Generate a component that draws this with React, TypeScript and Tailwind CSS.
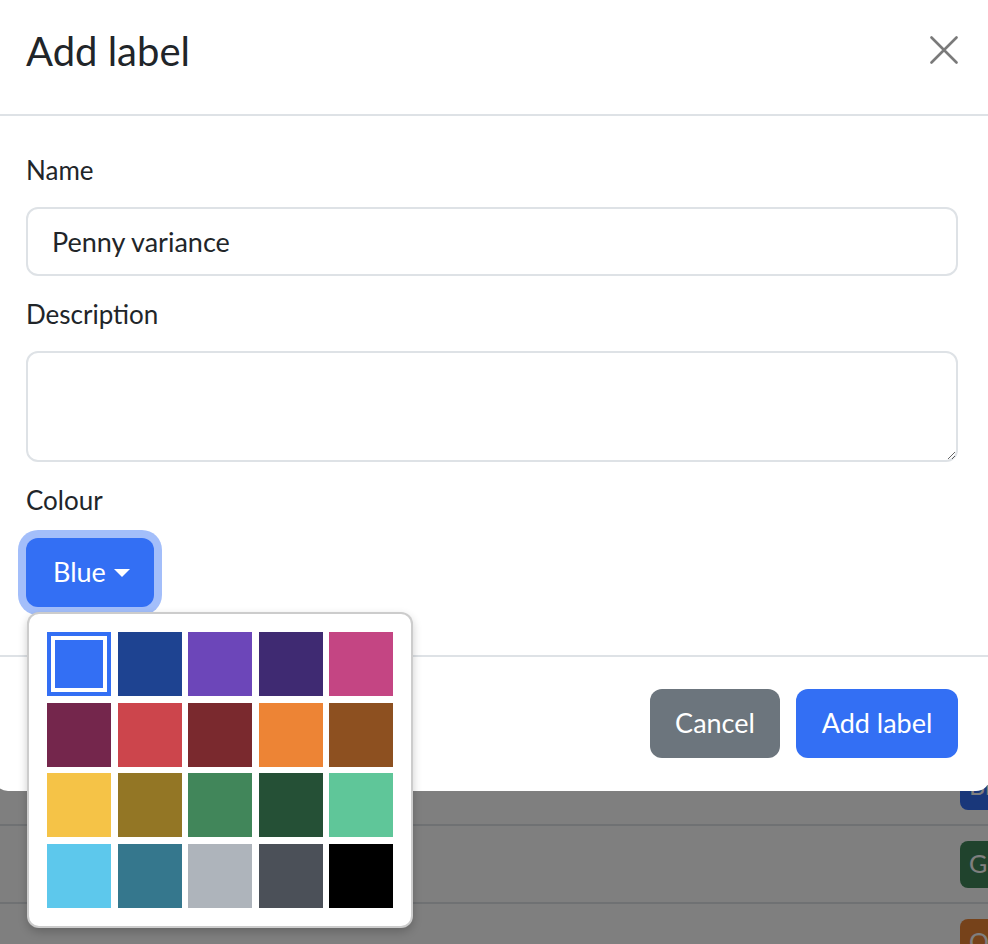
import React from "react";

const swatches = [
  "#336ff4", "#1e4391", "#6c46b9", "#3f2a72", "#c44583",
  "#74264c", "#cc454c", "#7a292e", "#ed8435", "#8d5020",
  "#f5c347", "#937625", "#41865a", "#255036", "#5fc699",
  "#5dc8ec", "#35778d", "#aeb4bb", "#4b5058", "#000000",
];

export default function App() {
  return (
    <div className="relative h-[944px] w-[988px] overflow-hidden bg-white font-['Lato',sans-serif] text-[#212529]">
      {/* background page */}
      <div className="pt-[748px]">
        {[
          { c: "bg-[#336ff4]", t: "Blue" },
          { c: "bg-[#41865a]", t: "Green" },
          { c: "bg-[#ed8435]", t: "Orange" },
        ].map((r) => (
          <div key={r.t} className="flex h-[78px] items-center whitespace-nowrap border-b-2 border-[#dee2e6] pl-[960px]">
            <div className={`flex h-[47px] items-center rounded-[8px] px-[9px] text-[25px] text-white ${r.c}`}>{r.t}</div>
          </div>
        ))}
      </div>

      {/* overlay */}
      <div className="absolute inset-0 bg-black/50" />

      {/* modal */}
      <div className="absolute left-[-6px] top-0 w-[996px] rounded-b-[14px] bg-white">
        <div className="flex h-[116px] items-start justify-between border-b-2 border-[#dee2e6] px-[32px] pt-[27px]">
          <h1 className="text-[40px] font-normal leading-[48px]">Add label</h1>
          <svg width="28" height="28" viewBox="0 0 28 28" className="mt-[9px]">
            <path d="M1.5 1.5 L26.5 26.5 M26.5 1.5 L1.5 26.5" stroke="#7a7a7a" strokeWidth="2.6" strokeLinecap="round" />
          </svg>
        </div>

        <div className="px-[32px] pb-[48px] pt-[33px]">
          <div className="mb-[17px]">
            <div className="mb-[15px] h-[43px] text-[26px] leading-[43px]">Name</div>
            <input
              readOnly
              value="Penny variance"
              className="block h-[69px] w-full rounded-[12px] border-2 border-[#dee2e6] px-[24px] text-[27px] text-[#212529] outline-none"
            />
          </div>
          <div className="mb-[17px]">
            <div className="mb-[15px] h-[43px] text-[26px] leading-[43px]">Description</div>
            <textarea className="block h-[111px] w-full rounded-[12px] border-2 border-[#dee2e6] px-[24px] text-[27px] outline-none" />
          </div>
          <div>
            <div className="mb-[16px] h-[43px] text-[26px] leading-[43px]">Colour</div>
            <button className="flex h-[69px] w-[128px] items-center gap-[8px] rounded-[12px] bg-[#336ff4] pl-[27px] text-[27px] text-white ring-[8px] ring-[#336ff4]/45">
              <span>Blue</span>
              <span className="h-0 w-0 border-x-[8px] border-t-[8px] border-x-transparent border-t-white" />
            </button>
          </div>
        </div>

        <div className="flex justify-end gap-[16px] border-t-2 border-[#dee2e6] px-[32px] pb-[33px] pt-[32px]">
          <button className="flex h-[69px] w-[130px] items-center justify-center rounded-[12px] bg-[#6c757d] text-[27px] text-white">Cancel</button>
          <button className="flex h-[69px] w-[162px] items-center justify-center rounded-[12px] bg-[#336ff4] text-[27px] text-white">Add label</button>
        </div>
      </div>

      {/* dropdown */}
      <div className="absolute left-[27px] top-[612px] rounded-[12px] border-2 border-black/20 bg-white p-[18px] shadow-[0_4px_10px_rgba(0,0,0,0.2)]">
        <div className="grid grid-cols-[repeat(5,64px)] grid-rows-[repeat(4,64px)] gap-[6.5px]">
          {swatches.map((c, i) =>
            i === 0 ? (
              <div key={i} className="bg-[#336ff4] p-[4px]">
                <div className="h-full w-full bg-white p-[4px]">
                  <div className="h-full w-full bg-[#336ff4]" />
                </div>
              </div>
            ) : (
              <div key={i} style={{ backgroundColor: c }} />
            )
          )}
        </div>
      </div>
    </div>
  );
}
